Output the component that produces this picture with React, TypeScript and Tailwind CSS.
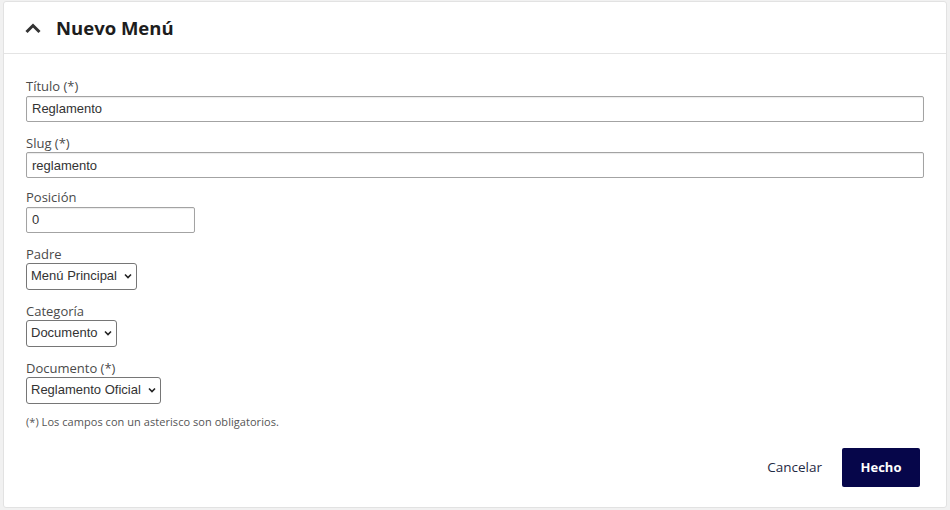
import React from 'react';

const sans = { fontFamily: '"Open Sans", sans-serif' };
const arial = { fontFamily: '"Liberation Sans", Arial, sans-serif' };

function Label({ children }: { children: React.ReactNode }) {
  return (
    <label className="block text-[13px] leading-[16px] text-[#4a4a4a] mb-[1px]" style={sans}>
      {children}
    </label>
  );
}

function TextField({ label, value, width, mb }: { label: string; value: string; width?: string; mb: string }) {
  return (
    <div className={mb}>
      <Label>{label}</Label>
      <input
        readOnly
        value={value}
        className={`${width ?? 'w-full'} h-[26px] border border-[#a3a3a3] rounded-[2px] px-[5px] text-[13px] text-[#333] shadow-[inset_0_1px_1px_rgba(0,0,0,0.08)] outline-none`}
        style={arial}
      />
    </div>
  );
}

function SelectField({ label, value, width }: { label: string; value: string; width: string }) {
  return (
    <div className="mb-[13px]">
      <Label>{label}</Label>
      <div
        className={`${width} h-[27px] border border-[#767676] rounded-[3px] flex items-center justify-between pl-[4px] pr-[3px] text-[13px] text-[#333]`}
        style={arial}
      >
        <span>{value}</span>
        <svg width="10" height="10" viewBox="0 0 10 10" className="ml-[2px]">
          <path d="M2 3.5 L5 6.5 L8 3.5" fill="none" stroke="#222" strokeWidth="1.6" />
        </svg>
      </div>
    </div>
  );
}

export default function App() {
  return (
    <div className="w-[950px] h-[510px] bg-[#f1f1f1] pt-[1px] pl-[3px] pr-[3px]">
      <div className="h-[507px] bg-white border border-[#e2e2e2] rounded-[3px] flex flex-col">
        {/* Header */}
        <div className="h-[52px] border-b border-[#e4e4e4] flex items-center pl-[20px]">
          <svg width="18" height="12" viewBox="0 0 18 12">
            <path d="M2.5 10 L9 3.5 L15.5 10" fill="none" stroke="#333" strokeWidth="3" />
          </svg>
          <h2 className="ml-[14px] text-[18.5px] font-bold text-[#1d1d1d]" style={sans}>
            Nuevo Menú
          </h2>
        </div>

        {/* Form */}
        <div className="flex-1 flex flex-col px-[22px] pt-[24px]">
          <TextField label="Título (*)" value="Reglamento" mb="mb-[13px]" />
          <TextField label="Slug (*)" value="reglamento" mb="mb-[11px]" />
          <TextField label="Posición" value="0" width="w-[169px]" mb="mb-[13px]" />
          <SelectField label="Padre" value="Menú Principal" width="w-[111px]" />
          <SelectField label="Categoría" value="Documento" width="w-[91px]" />
          <SelectField label="Documento (*)" value="Reglamento Oficial" width="w-[135px]" />
          <p className="text-[11px] tracking-[0.05px] text-[#555] -mt-[3px]" style={sans}>
            (*) Los campos con un asterisco son obligatorios.
          </p>

          <div className="flex justify-end items-center mt-[18px] pr-[4px]">
            <button className="text-[13.5px] text-[#1f2a44] mr-[20px]" style={sans}>
              Cancelar
            </button>
            <button
              className="w-[78px] h-[39px] bg-[#06064a] text-white text-[13px] font-bold rounded-[2px]"
              style={sans}
            >
              Hecho
            </button>
          </div>
        </div>
      </div>
    </div>
  );
}
